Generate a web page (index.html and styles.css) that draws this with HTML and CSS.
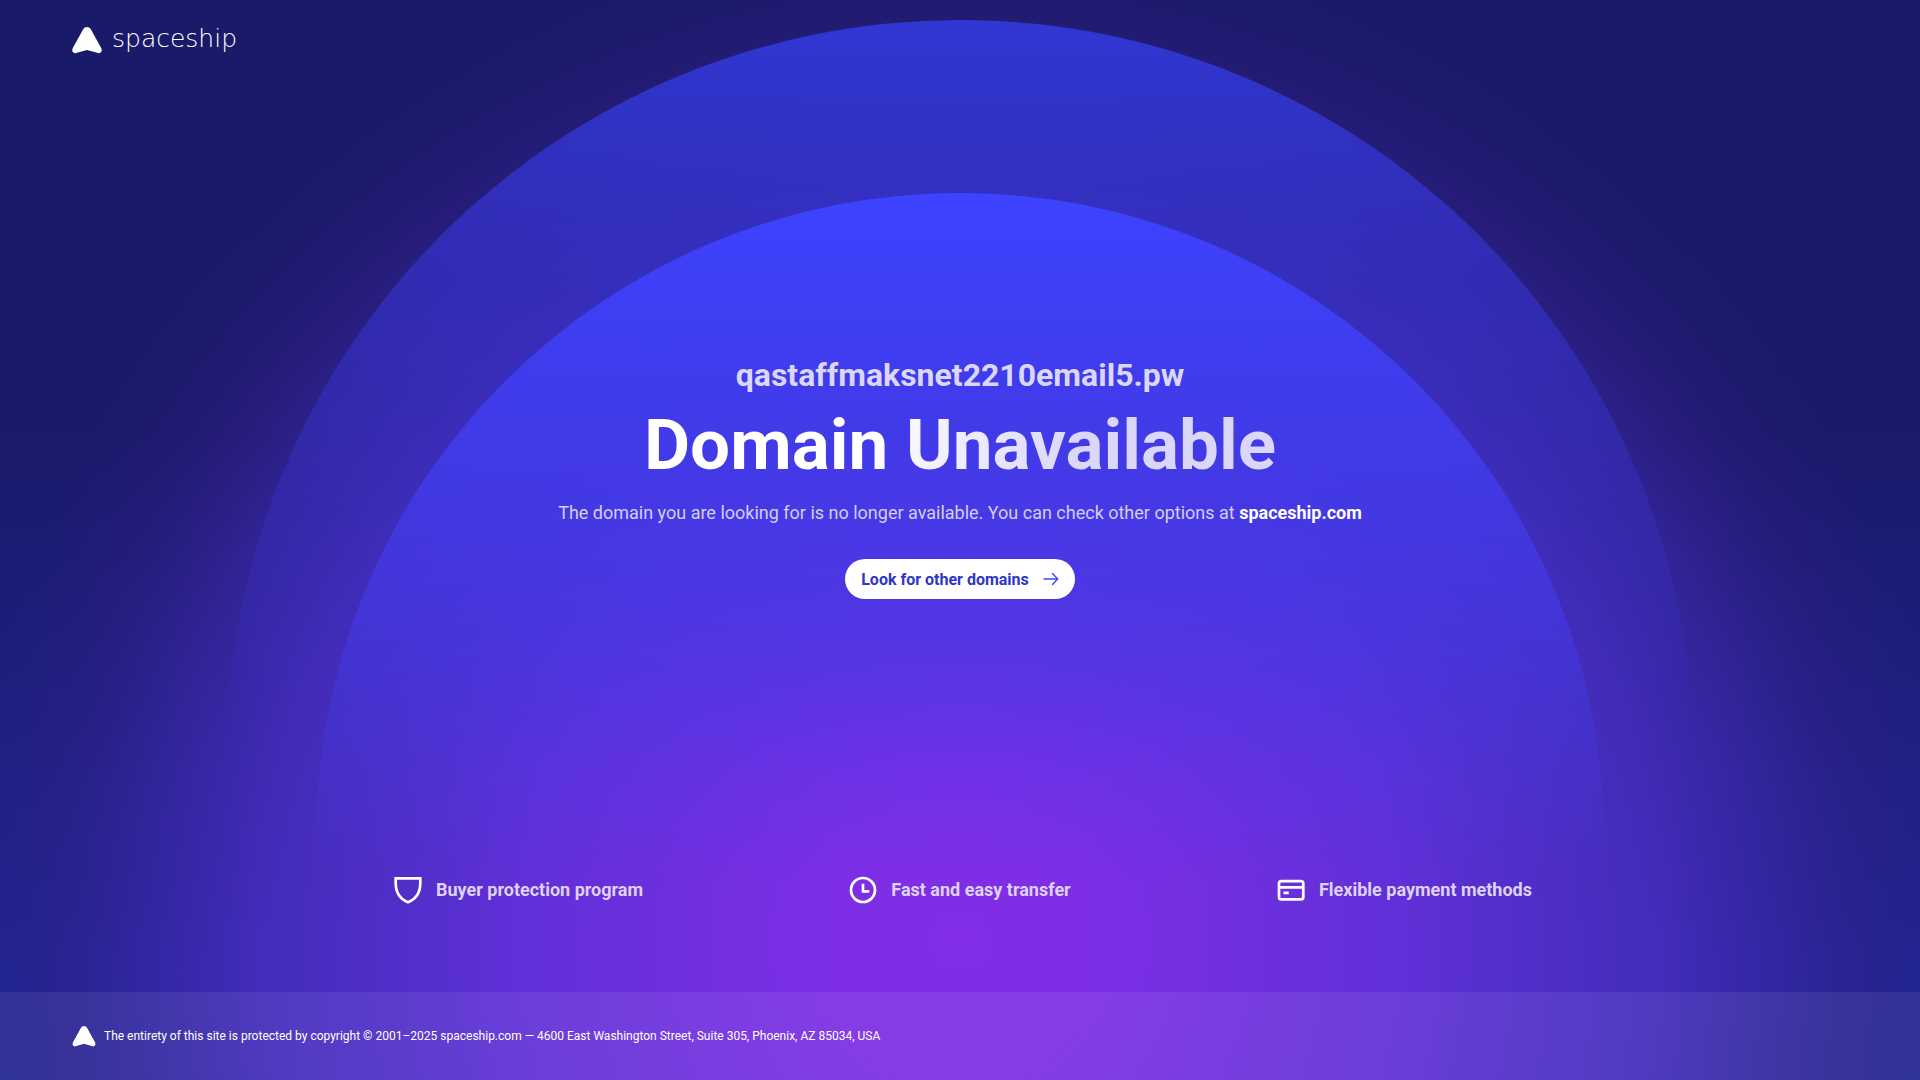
FILE: index.html
```html
<!DOCTYPE html>
<html lang="en">
<head>
<meta charset="utf-8">
<meta name="viewport" content="width=device-width, initial-scale=1">
<title>Domain Unavailable</title>
<link rel="stylesheet" href="styles.css">
</head>
<body>
<div class="page">
  <svg class="backdrop" viewBox="0 0 1920 1080" preserveAspectRatio="xMidYMid slice" aria-hidden="true">
    <defs>
      <linearGradient id="sky" x1="0" y1="0" x2="0" y2="1">
        <stop offset="0" stop-color="#191a6a"/>
        <stop offset="0.4" stop-color="#191a6a"/>
        <stop offset="0.9" stop-color="#1e2592"/>
        <stop offset="1" stop-color="#1e2592"/>
      </linearGradient>
      <radialGradient id="glow" gradientUnits="userSpaceOnUse" cx="960" cy="940" r="1000">
        <stop offset="0" stop-color="#812ee6"/>
        <stop offset="0.15" stop-color="#7c2ee4"/>
        <stop offset="0.45" stop-color="#6230da" stop-opacity="0.96"/>
        <stop offset="0.7" stop-color="#502fca" stop-opacity="0.73"/>
        <stop offset="0.82" stop-color="#4428b0" stop-opacity="0.5"/>
        <stop offset="0.92" stop-color="#3c1e8c" stop-opacity="0.24"/>
        <stop offset="1" stop-color="#3c1e8c" stop-opacity="0"/>
      </radialGradient>
      <linearGradient id="outer" gradientUnits="userSpaceOnUse" x1="0" y1="19" x2="0" y2="760">
        <stop offset="0" stop-color="#3037d3"/>
        <stop offset="0.3" stop-color="#3330c4" stop-opacity="0.8"/>
        <stop offset="1" stop-color="#3a32c8" stop-opacity="0"/>
      </linearGradient>
      <linearGradient id="inner" gradientUnits="userSpaceOnUse" x1="0" y1="193" x2="0" y2="880">
        <stop offset="0" stop-color="#3d43ff"/>
        <stop offset="0.3" stop-color="#403cee" stop-opacity="0.93"/>
        <stop offset="0.6" stop-color="#443cee" stop-opacity="0.55"/>
        <stop offset="1" stop-color="#443cee" stop-opacity="0"/>
      </linearGradient>
    </defs>
    <rect width="1920" height="1080" fill="url(#sky)"/>
    <rect width="1920" height="1080" fill="url(#glow)"/>
    <circle cx="960" cy="753" r="733" fill="url(#outer)"/>
    <circle cx="960" cy="837" r="644" fill="url(#inner)"/>
  </svg>

  <header class="header">
    <a class="brand" href="#">
      <svg class="brand-mark" viewBox="0 0 30 27" aria-hidden="true"><path d="M11.300 2Q12.500 0 15 0Q17.500 0 18.700 2L29.300 21.200Q30.200 23.200 29.300 24.800Q28.200 26.600 26 26.100L15 22.900L4 26.100Q1.800 26.600 .7 24.800Q-.2 23.200 .7 21.200Z"/></svg>
      <span class="brand-name">spaceship</span>
    </a>
  </header>

  <main class="main">
    <section class="hero">
      <p class="domain">qastaffmaksnet2210email5.pw</p>
      <h1 class="title">Domain Unavailable</h1>
      <p class="text">The domain you are looking for is no longer available. You can check other options at <a class="text-link" href="#">spaceship.com</a></p>
      <button class="button" type="button">Look for other domains
        <svg class="button-icon" viewBox="0 0 16 14" aria-hidden="true"><path d="M1 7H14.500M9.500 1.500L14.700 7L9.500 12.500"/></svg>
      </button>
    </section>
    <ul class="features">
      <li class="feature">
        <svg class="feature-icon" viewBox="0 0 32 32" aria-hidden="true"><path d="M3.700 4.300H28.300V9C28.300 18.500 23.500 25.200 16 28.300C8.500 25.200 3.700 18.500 3.700 9Z"/></svg>
        <span>Buyer protection program</span>
      </li>
      <li class="feature">
        <svg class="feature-icon" viewBox="0 0 32 32" aria-hidden="true"><circle cx="16" cy="16" r="12"/><path d="M16 9.700V17.300H22.300"/></svg>
        <span>Fast and easy transfer</span>
      </li>
      <li class="feature">
        <svg class="feature-icon" viewBox="0 0 32 32" aria-hidden="true"><rect x="4" y="7.200" width="24.300" height="18.200" rx="2.500"/><path d="M4 13.300H28.300M8.500 18.900H13.700"/></svg>
        <span>Flexible payment methods</span>
      </li>
    </ul>
  </main>

  <footer class="footer">
    <svg class="footer-mark" viewBox="0 0 30 27" aria-hidden="true"><path d="M11.300 2Q12.500 0 15 0Q17.500 0 18.700 2L29.300 21.200Q30.200 23.200 29.300 24.800Q28.200 26.600 26 26.100L15 22.900L4 26.100Q1.800 26.600 .7 24.800Q-.2 23.200 .7 21.200Z"/></svg>
    <small class="copyright">The entirety of this site is protected by copyright © 2001–2025 spaceship.com — 4600 East Washington Street, Suite 305, Phoenix, AZ 85034, USA</small>
  </footer>
</div>
</body>
</html>
```
FILE: styles.css
```css
* {
  box-sizing: border-box;
}

body {
  margin: 0;
  font-family: Roboto, "Liberation Sans", sans-serif;
  color: #fff;
  background: #191a6a;
}

.page {
  position: relative;
  z-index: 0;
  display: flex;
  flex-direction: column;
  min-height: 100vh;
  overflow: hidden;
}

.backdrop {
  position: absolute;
  inset: 0;
  z-index: -1;
  width: 100%;
  height: 100%;
}

.header {
  display: flex;
  align-items: center;
  height: 80px;
  padding: 0 72px;
}

.brand {
  display: flex;
  align-items: center;
  gap: 10px;
  color: inherit;
  text-decoration: none;
}

.brand-mark {
  width: 30px;
  height: 27px;
  fill: #fff;
}

.brand-name {
  padding-bottom: 2px;
  font-family: "DejaVu Sans", Inter, sans-serif;
  font-size: 25px;
  font-weight: 200;
  line-height: 32px;
}

.main {
  display: flex;
  flex: 1;
  flex-direction: column;
}

.hero {
  display: flex;
  flex: 1;
  flex-direction: column;
  align-items: center;
  justify-content: center;
  padding: 0 24px;
  text-align: center;
}

.domain {
  margin: 0;
  color: #dad7fb;
  font-size: 32px;
  font-weight: 700;
  line-height: 40px;
}

.title {
  margin: 8px 0 12px;
  background: linear-gradient(100deg, #fff 36%, #dad7fb 68%);
  background-clip: text;
  color: transparent;
  font-size: 71px;
  font-weight: 700;
  line-height: 84px;
}

.text {
  margin: 0;
  color: #d3cdf9;
  font-size: 18px;
  line-height: 28px;
}

.text-link {
  color: #fff;
  font-weight: 700;
  text-decoration: none;
}

.button {
  display: flex;
  align-items: center;
  gap: 14px;
  height: 40px;
  margin-top: 32px;
  padding: 0 16px;
  border: 0;
  border-radius: 20px;
  background: #fff;
  color: #2d37c8;
  font-family: inherit;
  font-size: 16px;
  font-weight: 700;
  cursor: pointer;
}

.button-icon {
  width: 16px;
  height: 14px;
  fill: none;
  stroke: #3d4bf5;
  stroke-width: 1.5;
  stroke-linecap: round;
  stroke-linejoin: round;
}

.features {
  display: flex;
  justify-content: space-between;
  width: 1144px;
  max-width: 100%;
  margin: 0 auto;
  padding: 0 0 86px 4px;
  list-style: none;
}

.feature {
  display: flex;
  align-items: center;
  gap: 12px;
  color: #dfd2fa;
  font-size: 18px;
  font-weight: 700;
  line-height: 32px;
}

.feature-icon {
  width: 32px;
  height: 32px;
  fill: none;
  stroke: #fff;
  stroke-width: 2.7;
}

.footer {
  display: flex;
  align-items: center;
  gap: 8px;
  min-height: 88px;
  padding: 0 72px;
  background: rgba(255, 255, 255, 0.07);
}

.footer-mark {
  width: 24px;
  height: 21px;
  fill: #fff;
}

.copyright {
  font-size: 12px;
  line-height: 20px;
}
```
